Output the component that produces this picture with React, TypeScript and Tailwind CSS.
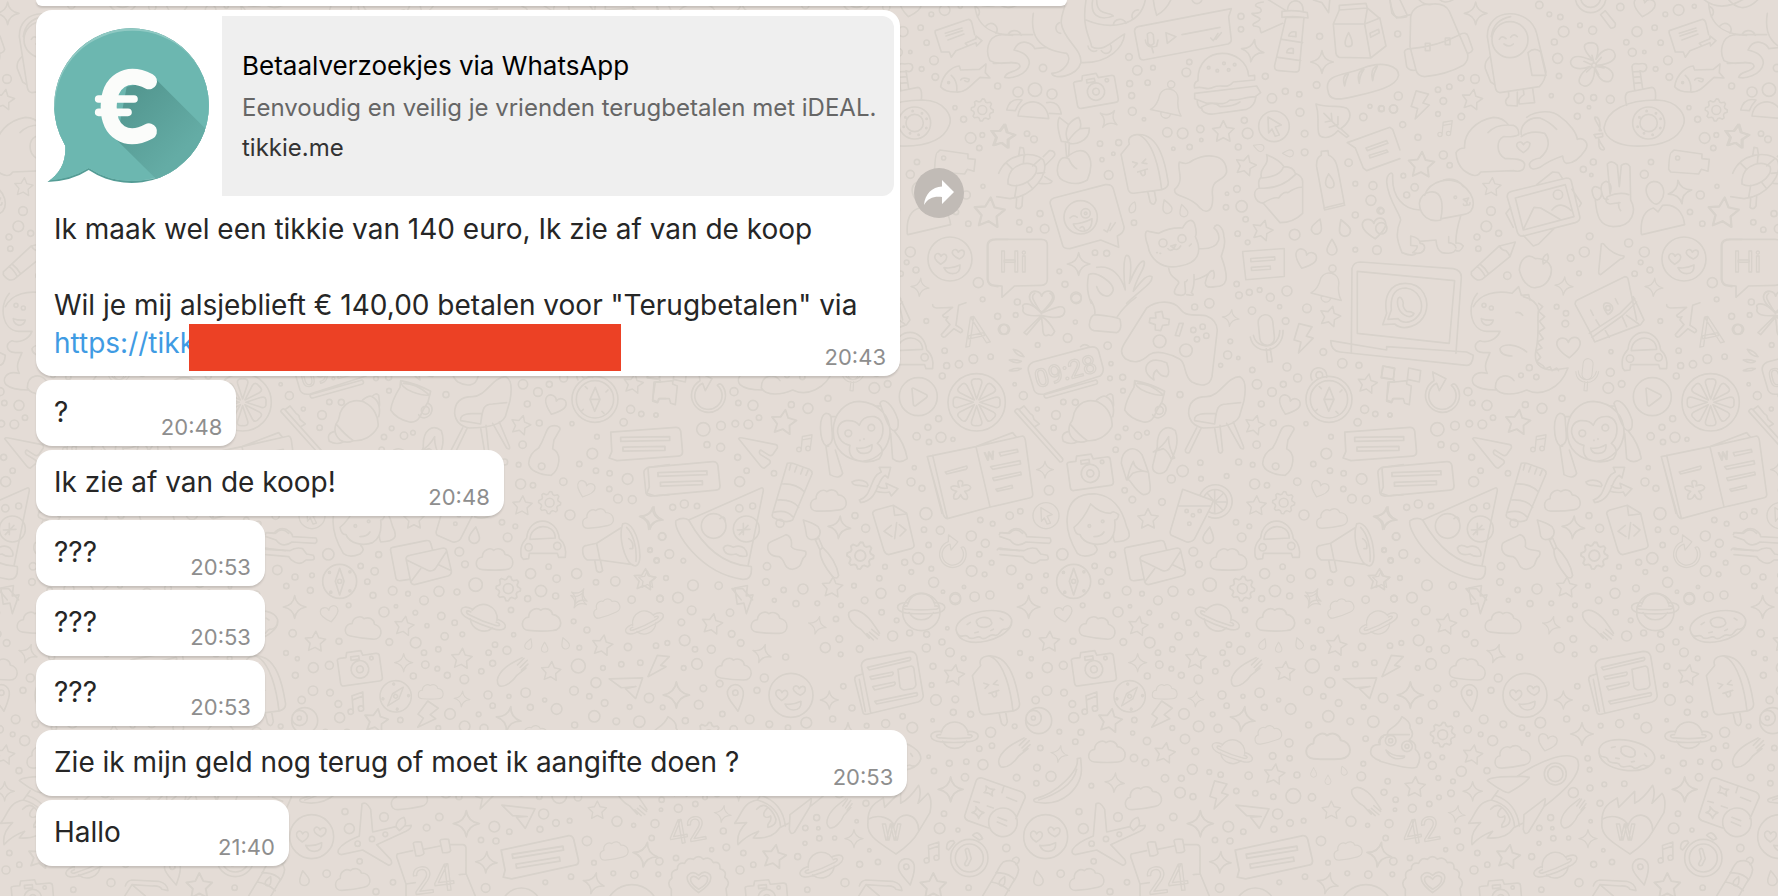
import type { ReactNode } from "react";

const ring = (x: number, y: number, r: number) =>
  `M${x - r} ${y}a${r} ${r} 0 1 0 ${2 * r} 0a${r} ${r} 0 1 0 ${-2 * r} 0`;

const burst = (points: number, outer: number, inner: number) => {
  const steps = Array.from({ length: points * 2 }, (_, i) => {
    const radius = i % 2 ? inner : outer;
    const angle = (Math.PI * i) / points - Math.PI / 2;
    return `${(Math.cos(angle) * radius).toFixed(1)} ${(Math.sin(angle) * radius).toFixed(1)}`;
  });
  return `M${steps.join("L")}Z`;
};

const cog = (r: number) => {
  const steps = Array.from({ length: 32 }, (_, i) => {
    const radius = i % 4 < 2 ? r : r * 0.78;
    const angle = (Math.PI * i) / 16;
    return `${(Math.cos(angle) * radius).toFixed(1)} ${(Math.sin(angle) * radius).toFixed(1)}`;
  });
  return `M${steps.join("L")}Z${ring(0, 0, r * 0.4)}`;
};

const slices = Array.from({ length: 8 }, (_, i) => i * 45);

// Every shape is centred on 0,0
const shapes = {
  star: burst(5, 34, 17),
  sparkle: "M0-34Q4-5 34 0Q4 5 0 34Q-4 5-34 0Q-4-5 0-34Z",
  gear: cog(35),
  cloud:
    "M-38 30C-64 28-60-6-38-8C-38-30-14-38-4-28C10-38 28-30 30-16C60-12 62 28 32 30Q0 33-38 30Z",
  drop: "M0-24C10-8 15 2 15 8A15 15 0 0 1-15 8C-15 2-10-8 0-24Z",
  heart: "M0 30C-30 8-36-8-32-18C-26-32-4-30 0-14C6-32 28-32 33-16C36-6 28 10 0 30Z",
  bolt: "M-16-42L22-36L8-8L28-4L-10 42L-6 10L-26 6Z",
  music:
    "M-12 20L-8-24L26-30L20 16M-8-12L24-18" + ring(-20, 22, 8) + ring(12, 18, 8),
  camera:
    "M-62-26Q-64-34-54-34L-36-34L-32-48L10-48L14-34L52-34Q62-34 62-26L62 38Q62 48 52 48L-52 48Q-62 48-62 38Z" +
    ring(0, 6, 26) + ring(0, 6, 10) + ring(38, -22, 5) + "M-22-34h24v10h-24Z",
  love:
    ring(0, 0, 66) +
    "M-28 16C-46 4-48-6-44-12C-38-20-30-16-27-8C-22-18-12-16-10-8C-8 2-18 10-28 16ZM28 0C10-8 4-18 8-24C14-32 22-28 25-20C30-30 42-28 43-20C44-10 36-4 28 0ZM-18 26Q6 30 30 18Q32 44 8 44Q-10 44-18 26Z",
  compass:
    ring(0, 0, 50) + "M0-38L13 0L0 40L-13 0Z" + ring(0, 0, 6) +
    ring(30, -28, 3) + ring(-30, -26, 3) + ring(30, 28, 3) + ring(-26, 32, 3),
  planet:
    "M-40-8A42 42 0 0 1 42-8M-36 18A42 42 0 0 0 38 18M-42-12C-84-14-80 18-40 20Q0 24 40 20C84 18 84-14 42-12M-42-2C-60-4-58 8-40 8Q0 12 40 8C58 8 60-4 42-2",
  comet:
    "M-38 40C-56 20-30-14 10-34M38-44L18-24M48-38L26-16M50-26L30-8M10-34L32-46M-38 40C-20 48 6 24 16 8L44-14",
  pin: "M0 42C-14 14-24 4-24-14A24 24 0 0 1 24-14C24 4 14 18 0 42Z" + ring(0, -14, 8),
  plane: "M-50-28L50-22L24 38L-4 6L28 2L-16 2Z",
  bell: "M-50 34L54 34C38 16 34 0 32-22A32 32 0 0 0-30-22C-30 0-34 20-50 34ZM-14 36A14 14 0 0 0 18 36" + ring(0, -62, 12),
  drip: "M-12 16C-20-2 2-18 8-20C14-4 14 18-2 20Q-8 22-12 16Z",
  banana:
    "M66-70L56-68C62-30-8 38-70 52Q-80 56-70 62C14 80 74 14 68-44ZM54-36C44 10-8 40-60 56",
  donut:
    "M-84 4C-84-50 70-70 84-18C92 40-76 78-84 4ZM-84 4C-76 40-60 14-50 26C-40 44-20 20-10 32C4 44 14 18 30 26C46 34 50 4 62 10C74 12 84 0 84-18M-20-12A22 12 0 1 0 22-16A22 12 0 1 0-20-12M-50-10l10-6M-28 16l10-2M20 12l8-4M50-24l8 6",
  car: "M-66 44C-72 10-58-2-50-12C-44-80 40-80 48-10C64 2 70 26 66 46L46 46L42 34L-42 34L-44 50L-60 52ZM-40-8C-38-56 34-60 36-12Z" + ring(-44, 16, 11) + ring(42, 12, 11),
  smallcompose: "M-66-40L66-40L60 48L-62 50ZM-42-16h76v10h-76ZM-42 12h60v10h-60Z",
  refresh:
    "M-22-44A51 51 0 1 0 46-28Q38-40 30-30A41 41 0 1 1-14-36L-6-14L14-50L-26-70Z",
  mic: "M-22-34A22 22 0 0 1 22-34L22 14A22 22 0 0 1-22 14ZM-50 6C-44 66 44 66 50-4M-40 2C-34 50 34 50 40-4M-6 46L-6 86L8 86L6 46",
  lolly:
    "M-66-30L-38-58Q-44-82-14-84C60-84 64 30 66 68Q66 84 46 88L-40 90Q-54 90-56 76ZM-10-84C34-64 44 30 44 88M2 90L6 122Q16 138 24 118L22 90M-34-4l14 6l-12 10M6-8l-12 10l14 4M-22 28L8 22M-14 28Q-10 48 0 36L0 26",
  label: "M-100-34L86-44Q98-44 100-32L104 26Q104 38 92 38L-84 48L-106 40L-98 22Z M-72-18h140v11h-140ZM-66 10h120v11h-120Z",
  arrow: ring(0, 0, 46) + "M-18-28L22-4L4 2L16 26L4 30L-6 8L-16 20Z",
};

type Shape = keyof typeof shapes;
type Spot = [Shape, number, number, number?, number?];
type Dot = [number, number, number];

interface Patch {
  x: number;
  y: number;
  spots: Spot[];
  dots: Dot[];
  lines: string[];
  words?: ReactNode;
}

const outline = { fontFamily: "Roboto, sans-serif" };

// The wallpaper is drawn at three times its size, one patch at a time
const patches: Patch[] = [
  {
    x: 1000,
    y: 0,
    spots: [
      ["sparkle", 758, 152, 1, 10], ["sparkle", 966, 186], ["sparkle", 326, 357, 0.9, 35], ["sparkle", 236, 792],
      ["camera", 287, 269, 1, -10], ["bell", 502, 308, 0.9, 12], ["star", 670, 396], ["star", 737, 497, 0.95, 15],
      ["star", 787, 692, 0.95, 15], ["star", 10, 410, 1.1, 10], ["arrow", 822, 379], ["drip", 398, 622, 0.8],
      ["drop", 500, 620, 0.9, -20], ["drop", 550, 632, 0.8, -15], ["drop", 952, 680, 1, 20], ["drop", 1032, 684, 1.1, -20],
      ["drop", 996, 742, 1], ["heart", 1123, 685, 1.05, -5], ["heart", 915, 778, 0.95, 20], ["smallcompose", 793, 788, 0.95, -4],
      ["lolly", 432, 486, 1, -6], ["drop", 776, 442, 0.7, -70], ["drop", 864, 460, 0.7, -90], ["bell", 984, 860, 0.9, 14],
      ["heart", 125, 904, 1.1],
    ],
    dots: [
      [723, 49, 9], [723, 88, 8], [387, 171, 10], [412, 211, 14], [459, 203, 7], [568, 186, 8], [559, 217, 13],
      [796, 229, 9], [389, 251, 9], [443, 248, 8], [395, 287, 9], [397, 334, 12], [432, 358, 5], [129, 204, 11],
      [959, 109, 9], [950, 255, 10], [856, 274, 9], [898, 283, 8], [816, 295, 14], [900, 337, 12], [502, 397, 14],
      [548, 400, 16], [601, 387, 11], [604, 420, 5], [569, 441, 8], [520, 446, 5], [733, 361, 9], [743, 400, 16],
      [715, 441, 9], [914, 401, 10], [914, 457, 10], [356, 428, 9], [300, 431, 8], [340, 461, 5], [306, 479, 6],
      [326, 525, 13], [81, 401, 8], [102, 418, 10], [681, 581, 5], [711, 567, 10], [678, 622, 8], [725, 619, 17],
      [737, 658, 8], [713, 701, 8], [743, 727, 7], [884, 704, 16], [402, 668, 8], [120, 641, 9], [58, 667, 8],
      [88, 689, 8], [134, 686, 13], [285, 758, 8], [320, 760, 9], [178, 814, 7], [195, 853, 9], [228, 892, 16],
      [1066, 551, 7], [1119, 557, 12], [1113, 601, 15], [1141, 632, 10], [1066, 645, 9], [1066, 749, 7], [1131, 750, 13],
      [1046, 488, 11], [1110, 319, 6], [1144, 326, 9], [1181, 327, 12], [1090, 351, 11], [710, 852, 8], [748, 877, 9],
      [779, 870, 7], [861, 873, 15], [717, 886, 10], [811, 892, 12], [591, -4, 15],
    ],
    lines: [
      // octopus
      "M100 40C90 100 110 150 200 160C220 180 190 220 155 220C160 240 230 230 242 190C250 150 190 120 184 70C182 50 190 36 194 20M-100-10C-60 30 0 40 100-60M262-20C240 80 270 110 275 140C310 160 340 120 374 102C370 140 330 190 245 188M290-40C250 60 310 60 340 48C330 34 290 50 290 0M258 60C330 90 420 80 436 0M0 104L98 104M24 104A22 22 0 0 1 64 106M178 68C162 76 166 98 182 100M264 138A18 18 0 0 0 290 152M304 152A16 16 0 0 0 332 136M340 74A20 20 0 0 1 378 70M398 56A18 18 0 0 1 416 30M42 150C60 110 100 130 104 146L140 142M42 150Q88 160 88 190C80 230 30 236 14 232C20 210 50 220 60 200C60 180 20 190-20 190",
      // voice note
      "M404 96Q402 84 414 80L694 26L686 50L694 120Q694 128 684 132L430 180Q420 180 418 170ZM442 102Q452 92 460 104L462 130Q452 142 444 130ZM436 120Q440 148 470 138L474 120M456 144L460 158M498 98L528 110L502 130ZM546 104L660 82M632 114l8 8l14-22M648 118l16-20",
      // burger
      "M594 242C590 130 740 140 746 228L764 226L764 240L700 246C680 270 664 250 640 262C620 274 610 256 584 264Q580 248 594 242M584 280L770 258L782 278L766 290C740 290 710 304 690 300C670 320 650 306 620 310L584 296ZM592 300C590 330 610 322 606 330Q616 344 640 342L740 328Q764 320 768 290M604 322Q640 300 660 320Q700 320 720 306",
      ring(626, 203, 4) + ring(652, 212, 4) + ring(686, 210, 4) + ring(672, 190, 4) + ring(704, 194, 4),
      // lighthouse
      "M858 52L824 196Q822 212 836 212L884 216Q898 216 898 206L912 52ZM846 34Q884 28 922 38L924 54Q884 46 846 52ZM862 32Q864 4 888 2Q910 6 910 34M846 118L908 128M834 172L902 182M866 108Q870 92 888 96L888 110ZM860 158Q862 142 880 146L880 160ZM858 32L800-4M848 70L784 98C776 90 790 80 762 78C750 70 780 66 780 56C770 46 756 48 756 40C780 40 790 36 780 24C760 18 762 10 790 6",
      // milk carton
      "M1000 72L1018 30L1018 16L1098 10L1102 24L1140 56L1158 138L1112 174L1018 172Q1010 170 1008 160ZM1000 72L1094 72L1112 174M1094 72L1102 26M1018 30L1102 24M1094 72L1140 54M1110 100L1136 88L1138 98L1112 112ZM1046 98C1062 130 1058 140 1046 140C1032 140 1032 124 1046 98",
      // bread
      "M984 272C970 220 1040 226 1090 204C1150 180 1196 200 1196 226C1190 260 1130 274 1060 290C1010 302 986 300 984 272M1034 258Q1024 226 1046 220Q1036 240 1034 258M1078 250Q1068 216 1092 208Q1078 228 1078 250M1118 242Q1110 204 1132 198Q1120 220 1118 242",
      // leaf
      "M948 312C990 326 1030 312 1044 328C1060 350 1040 376 1022 386L1046 408L1040 412L1014 392C990 420 960 416 956 400C950 370 960 350 948 312M972 340L1018 386M994 340L996 362L976 366M1014 350L1014 374L988 382",
      // speech note
      "M1042 428L1170 382L1178 388L1200 450M1042 428L1066 444L1090 504L1100 512L1200 476M1098 444L1160 422L1164 430L1102 452ZM1108 466L1160 450L1164 456L1110 474Z",
      // team
      ring(54, 276, 15) + ring(105, 269, 20) + ring(156, 282, 15) +
        "M54 348C60 290 140 290 146 356ZM20 330Q30 292 66 300Q52 316 46 332ZM140 308Q176 300 184 342L148 340",
      // turtle
      "M-4 520C20 460 100 450 130 480C150 520 100 590 30 596L-10 590M24 540C30 490 90 480 108 500C120 530 60 572 24 552ZM56 468L60 442L70 444L74 468M130 470L148 452C164 450 170 464 158 474L134 498M50 596L48 622Q58 632 66 618L68 588M134 530L156 544Q154 554 118 550M20 490L38 508M72 468L70 490M120 478L98 498M112 520L134 518M84 548L98 566M50 556L44 592",
      // tulip
      "M184 424C170 380 172 362 178 352L206 374Q220 356 236 352Q246 370 240 386L268 384C270 424 220 440 200 426ZM196 426L200 472M208 428L206 468M206 374Q192 400 204 424M240 386Q220 400 204 424M200 472C260 420 290 480 262 540C230 560 170 550 172 510C174 480 186 466 206 476Q216 500 230 506",
      // splash
      "M538 486C550 490 560 496 580 480C620 460 680 460 680 516C670 550 630 530 638 590C640 640 616 640 600 624C570 584 520 594 524 568C556 540 530 510 538 486Z",
      // cupcake
      "M784 532C776 500 810 500 800 464Q840 480 852 500Q880 500 886 520Q910 530 908 548L908 640Q880 668 840 668L790 610C760 606 756 570 778 564Q772 540 784 532ZM786 534Q840 530 850 502M778 564Q840 570 886 524M788 610Q820 590 836 594Q850 574 864 578Q890 560 908 562",
      // bottle
      "M964 466L964 454L984 452L986 466C1010 476 1012 500 1018 530L1034 616L974 630L950 500Q948 472 964 466ZM972 624L1030 610M986 522C1010 550 1004 564 990 564C972 560 974 540 986 522",
      // sticker
      "M152 616Q146 600 162 594L316 554Q336 552 340 566L372 680Q374 698 352 708L356 742L302 720L210 746Q190 746 188 736Z" +
        ring(242, 652, 50) + ring(257, 640, 14) + ring(257, 640, 4) +
        "M210 654Q220 642 232 652M220 672Q250 670 276 656Q276 694 246 694Q226 690 220 672M240 684Q250 674 254 690M312 690l10 6l10-26M330 692l16-24",
      // cat
      "M444 738C430 700 438 690 446 694L476 700Q510 682 548 684C560 660 576 654 584 672Q592 700 586 710C610 760 590 790 540 798C480 812 448 770 444 738M598 746C670 750 664 700 642 684C650 664 670 680 672 710C680 740 664 760 664 770C690 840 680 860 646 860Q614 866 616 848Q624 810 640 812Q646 826 640 836M506 804C510 840 540 836 536 850Q514 880 530 884Q560 892 556 870L554 846Q560 846 562 840M582 824Q584 860 574 878Q590 890 560 884M582 840Q620 830 634 812" +
        ring(489, 729, 12) + ring(546, 716, 12) + "M512 738L528 734L522 744ZM504 746Q510 756 522 746Q532 754 542 738M470 758h2M480 760h2M568 738l6-6",
      // sprouts
      "M290 802C330 796 360 820 376 870C370 830 370 770 380 766C400 764 390 840 388 850C400 820 420 780 432 784C440 800 410 830 400 874C420 850 440 820 456 830C460 850 420 870 380 910M266 824C290 810 340 850 340 870C330 900 300 890 290 860M266 824Q256 870 274 910",
      // Hi sign
      "M-10 718L124 718Q142 718 142 734L142 838Q142 856 124 856L44 858L6 892L6 858L-16 856Q-36 854-36 836L-36 736Q-36 720-10 718",
      // laptop lid
      "M1054 1060L1056 806Q1060 786 1082 786L1360 806Q1386 812 1384 834L1368 1060M1072 1000L1072 814L1364 842L1348 1030Z",
      "M-30-20Q20 60 80-10M460 0Q462 20 470 46Q500 30 514-4M940 0L966 8L986 38L990-8M1168-10L1176 40Q1190 60 1220 50",
    ],
    words: (
      <text x={-2} y={815} fontSize={88}>Hi</text>
    ),
  },
  {
    x: 1380,
    y: 0,
    spots: [
      ["sparkle", 287, 40], ["star", 276, 300, 0.95, 10], ["star", 124, 496, 1.2, 3], ["star", 335, 562, 0.85, 5],
      ["bolt", 120, 316, 1, 6], ["music", 196, 386, 0.8], ["sparkle", 552, 858, 0.8, 5], ["sparkle", 822, 862, 0.8, 5],
      ["love", 912, 777], ["gear", 1009, 330, 0.95], ["heart", 792, 22, 0.95, 10], ["sparkle", 900, 576, 1.05, -10],
      ["star", 1068, 410, 1.1, 10], ["star", 1030, 640, 1.4, 5],
    ],
    dots: [
      [53, 102, 9], [478, 15, 11], [508, 43, 7], [541, 51, 8], [551, 95, 16], [600, 76, 7], [638, 91, 12], [523, 126, 9],
      [533, 175, 15], [537, 228, 8], [721, 21, 11], [771, 95, 15], [739, 127, 8], [757, 157, 12], [793, 156, 5],
      [842, 128, 8], [824, 83, 8], [856, 43, 7], [896, 30, 16], [943, 19, 6], [864, 181, 13], [827, 207, 7], [868, 231, 10],
      [243, 234, 9], [285, 237, 13], [208, 260, 8], [174, 269, 8], [190, 303, 10], [244, 350, 10], [174, 342, 7],
      [55, 288, 12], [40, 327, 12], [5, 326, 8], [68, 374, 9], [114, 412, 9], [190, 465, 12], [209, 496, 8], [104, 562, 11],
      [70, 527, 7], [80, 585, 9], [333, 633, 13], [319, 679, 16], [356, 700, 9], [291, 711, 9], [295, 746, 8],
      [514, 287, 6], [597, 295, 15], [641, 293, 9], [691, 298, 12], [627, 322, 5], [592, 349, 9], [640, 486, 9], [610, 508, 9],
      [634, 525, 5], [813, 486, 8], [793, 523, 12], [927, 323, 6], [953, 358, 9], [974, 414, 16], [1009, 405, 7],
      [1000, 444, 8], [961, 585, 12], [1011, 559, 6], [930, 636, 8], [967, 671, 8], [629, 709, 10], [746, 729, 12],
      [793, 756, 15], [613, 756, 15], [572, 774, 10], [597, 820, 7], [782, 787, 7], [810, 810, 9], [764, 821, 8],
      [382, 827, 11], [997, 848, 15], [1055, 258, 9], [4, 633, 8], [4, 685, 17], [1010, 898, 7],
    ],
    lines: [
      // backpack
      "M92 50Q100 10 160 12Q196 10 208 34L262 160Q268 180 250 196Q200 224 134 230Q112 228 108 210L90 140ZM94 146Q170 140 236 106M136 130h14v22h-14ZM196 114h14v20h-14ZM238 104Q260 94 264 108L278 148Q276 158 262 160M94 146Q70 146 74 160L80 200Q90 214 108 210M30 0Q36 40 50 54L92 44M60 0L82 46M110-10Q130 20 160 12M172-10Q190 20 228-6",
      // astronaut
      "M322 110C320 20 450 20 470 100L498 216Q496 242 478 260L360 278Q348 276 346 262ZM334 110Q340 60 392 50M444 158Q464 140 482 156L498 226L456 226ZM330 170Q312 186 316 206L332 246L344 254M386 276L386 290Q370 304 382 316L412 318L412 276M430 270L432 284Q412 296 418 312L464 308L458 266" +
        ring(390, 119, 54) + "M358 118Q366 104 378 116M392 112Q402 98 412 110M372 132Q388 144 400 132",
      // magnifier
      ring(632, -8, 46) + ring(632, -8, 30) + "M662 44L692 84Q708 86 706 70L676 32Z",
      // flower
      "M640 182C600 140 610 128 636 128C662 130 654 160 648 178C670 140 700 140 706 166C704 190 670 194 652 196C690 200 710 220 692 242C664 256 650 220 644 204C644 240 630 260 612 258C584 250 600 220 630 200C590 214 570 200 572 184C582 156 620 176 640 182Z",
      ring(642, 196, 7) + "M642 189L636 166M648 190L664 172M649 199L672 204M645 203L656 224M636 201L620 216M635 194L612 184",
      // submarine
      "M672 384C680 330 740 300 830 300C900 302 920 350 910 376C890 430 820 440 760 438C720 436 676 420 672 384M740 316Q730 280 746 276L816 262Q830 264 826 300M764 270L756 200Q758 188 776 192Q802 186 800 204Q796 220 780 212L788 266M758 216L778 214M760 232L782 230M762 250L784 248M664 392C640 350 640 350 652 352C664 364 660 380 658 392ZM642 404L668 400L668 410L648 414ZM656 416C664 440 680 446 670 450C656 450 656 436 656 416" +
        ring(806, 369, 48) + ring(806, 369, 26) + ring(800, 333, 2) + ring(828, 340, 2) + ring(842, 356, 2) + ring(841, 384, 2) + ring(818, 404, 2) + ring(792, 400, 2) + ring(773, 380, 2) + ring(778, 352, 2),
      // chat card
      "M868 92L968 58Q976 60 978 70L986 104M868 92Q866 98 870 106L886 156L910 156L916 172L930 152L966 138M898 100L948 84M900 108L950 92M906 120L954 102M958 130L990 116L990 108L1008 122L992 138L990 128L966 138Z",
      // octopus arm
      "M986 10C990 90 1050 104 1100 106M990 20A18 18 0 0 1 994 50M1020 78A18 18 0 0 1 1050 100M1064 104C1020 110 1020 160 1032 182C1060 200 1090 182 1110 190",
      // fish
      "M884 260C890 220 920 200 940 198L944 210L1000 208L1020 192L1018 218L1032 234L1002 232C980 250 960 280 930 276C900 276 890 268 884 260M916 226Q936 244 932 276M944 240Q950 230 970 238Q968 250 956 242" + ring(908, 248, 3),
      // heart hands
      "M254 444C250 400 290 360 340 352Q370 352 386 376M324 398Q350 370 400 376Q418 384 416 404Q400 412 370 410C350 420 346 460 376 476Q430 474 434 492Q434 520 400 512L302 516Q290 540 250 510Q230 490 228 458Q236 444 254 444M424 404C420 380 440 350 480 354Q510 366 530 388M440 352C470 330 520 330 540 350C570 370 590 400 592 418C610 410 630 430 616 450Q590 490 560 490Q550 488 548 468Q510 480 480 502Q450 516 448 492Q454 478 480 474C510 450 510 420 494 400Q450 390 424 410",
      "M430 458C410 446 406 434 414 428Q424 422 430 434Q440 420 450 430Q450 446 430 458Z",
      // dog
      "M20 546C20 520 40 510 38 530C36 590 70 630 120 630M20 546C24 600 60 640 62 660C40 710 60 740 66 758Q100 772 110 760M92 708L92 736L112 738Q112 748 98 758Q130 766 134 744Q134 730 120 730Q120 714 92 708M120 724L168 720Q170 750 186 758Q220 764 226 750Q240 760 250 738Q240 726 228 730Q226 700 242 648M206 710L206 728Q226 730 228 744M150 576C190 570 190 620 182 660C150 668 120 650 118 610C120 590 130 580 150 576M134 586C150 540 210 530 244 552Q280 580 280 610Q280 640 250 644L186 656M190 540Q230 530 250 560M250 598L266 594L260 606ZM260 606L262 614Q250 620 250 612M262 614Q270 618 270 608" + ring(226, 592, 4),
      // photo
      "M382 592Q380 578 396 574L560 534Q572 534 574 544L600 652Q600 664 586 668L430 708Q416 710 412 696ZM406 594L556 554L582 650L430 690ZM430 688L462 622L482 624L540 658M516 630Q540 600 574 632M470 554L518 516L536 518L548 536M576 568L604 610L598 620M392 622L378 640L400 682M430 706L460 738L476 732L522 686" + ring(534, 584, 14),
      // peace
      "M646 600C650 650 660 678 700 680C760 680 770 630 752 600L750 500Q740 484 724 496L718 560L712 496Q696 478 682 492L690 580M746 584Q720 574 682 590Q672 610 690 612L720 608M716 608Q714 622 722 632M690 582Q700 550 678 544Q660 550 664 572Q670 604 684 598M664 568Q640 550 636 572Q640 600 652 600Q668 594 664 572",
      // film camera
      "M876 456Q868 456 866 508L872 516L956 522L964 508L984 514L988 478L966 476L966 462L882 450Z" + ring(893, 474, 6),
      // contact
      "M822 544C850 544 860 580 842 604Q830 620 816 606C790 580 794 548 822 544M784 702C780 650 800 630 820 624L834 636L848 616C890 610 910 640 914 674L786 704Z",
      // pencil
      "M274 816L358 738L406 726L390 770L306 838Q290 846 274 824ZM358 738Q366 752 378 752Q386 760 390 770M292 800Q306 810 316 830M300 792Q316 804 326 822",
      // apple
      "M466 776C440 756 420 780 418 810C430 860 460 866 470 862C500 860 516 830 514 806C510 780 480 774 466 776ZM490 792Q484 770 502 762Q512 780 490 792",
      // play
      "M664 732Q670 728 676 738Q700 764 732 768Q734 774 720 778L662 824Q656 824 656 816Z",
      // dino head
      "M280 920C300 880 350 870 396 880L416 860L424 886L446 884L450 900",
      // map
      "M592 900L734 830Q742 830 744 836L770 960M592 900Q584 904 586 914L630 996L644 1026L782 974L792 960L760 890",
      // Hi sign
      "M1086 718L1040 718Q1024 722 1024 736L1024 838Q1026 856 1044 858L1056 860",
    ],
  },
  {
    x: 1000,
    y: 300,
    spots: [
      ["sparkle", 692, 54, 0.75, 8], ["star", 990, 50, 0.95, 15], ["bolt", 910, 116, 1.05, 5], ["mic", 800, 100, 1, -6],
      ["star", 1102, 252, 0.9, 10], ["heart", 866, 316, 0.95, 20], ["star", 764, 376, 0.9, 15], ["camera", 270, 514, 1.05, -8],
      ["sparkle", 135, 509, 0.75], ["star", 444, 658, 0.95], ["gear", 851, 608, 0.95], ["star", 769, 618, 0.9, 3],
      ["heart", 958, 568, 0.8, 20], ["cloud", 996, 655, 0.85, -8], ["sparkle", 1158, 654, 1, 10], ["arrow", 138, 647, 0.85],
      ["car", 832, 726], ["cloud", 687, 779, 1], ["drop", 626, 706, 1.05, 8], ["compass", 221, 844, 1.02], ["gear", 727, 866, 1.05],
      ["star", 1136, 840, 1, 5], ["label", 1140, 430, 1.05, -1], ["sparkle", 940, 890, 0.8, 30],
    ],
    dots: [
      [52, 6, 9], [47, 45, 7], [14, 88, 15], [113, 135, 7], [203, 114, 13], [226, 66, 6], [229, -4, 15], [323, 137, 11],
      [333, 191, 6], [330, 235, 7], [368, 232, 9], [369, 272, 7], [584, 21, 9], [628, 10, 14], [756, 32, 11], [857, 63, 10],
      [839, 20, 6], [921, 25, 13], [691, 124, 7], [683, 165, 12], [715, 174, 5], [662, 196, 6], [757, 210, 8], [771, 253, 14],
      [816, 276, 13], [850, 253, 9], [784, 312, 9], [820, 369, 9], [770, 434, 11], [970, 156, 10], [1027, 190, 14],
      [1077, 196, 9], [861, 201, 12], [893, 234, 12], [918, 371, 6], [1094, 328, 12], [1126, 342, 8], [1170, 345, 6],
      [1073, 367, 11], [993, 410, 7], [979, 461, 16], [940, 492, 8], [990, 512, 8], [1031, 520, 8], [1085, 537, 16],
      [1030, 567, 8], [1056, 596, 13], [1099, 599, 12], [540, 284, 9], [70, 287, 12], [44, 253, 5], [112, 327, 6],
      [168, 345, 13], [161, 383, 8], [190, 306, 8], [226, 307, 9], [377, 385, 7], [354, 411, 8], [414, 407, 11], [441, 398, 7],
      [347, 449, 8], [374, 571, 8], [397, 599, 10], [486, 606, 10], [514, 537, 12], [548, 513, 17], [601, 488, 8], [603, 536, 7],
      [680, 528, 7], [716, 486, 9], [758, 494, 7], [764, 552, 15], [801, 556, 8], [892, 545, 11], [912, 645, 15],
      [708, 667, 8], [748, 679, 7], [725, 712, 13], [147, 571, 14], [61, 634, 8], [29, 647, 11], [187, 763, 17], [338, 764, 9],
      [34, 810, 14], [87, 831, 9], [138, 826, 7], [61, 858, 8], [133, 871, 9], [284, 798, 8], [326, 814, 11], [304, 845, 8],
      [321, 886, 9], [380, 872, 13], [426, 881, 7], [519, 874, 15], [573, 876, 9], [629, 854, 20], [580, 755, 13], [597, 793, 10],
      [794, 821, 15], [848, 800, 8], [872, 836, 11], [825, 873, 17], [869, 888, 9], [932, 821, 15], [990, 847, 8],
      [1048, 844, 14], [1152, 750, 7], [1172, 781, 8], [1188, 710, 11],
    ],
    lines: [
      // clover
      "M124 40C90 0 60 10 70 24C62 44 90 50 124 46C150 52 190 60 194 36C196 10 170 20 124 40M124 48Q150 66 164 94Q156 112 146 104Q128 116 128 80ZM122 48L72 98L80 104L126 50M124 40C100 0 90-10 104-20M124 40C150 10 170-10 150-20",
      // wrist
      "M272 0Q288 26 284 44M408-8Q370 20 352 50M284 44Q350 50 360 58Q368 90 350 98L282 92Q268 88 268 74Q270 48 284 44",
      // controller
      "M440 24C470 0 520 0 540 26C560 56 600 40 620 48Q650 60 652 90L636 230C630 260 600 260 576 246C550 230 560 190 540 178C510 160 470 150 448 164C420 190 400 190 376 176C360 160 362 148 376 126ZM466 38L486 34L490 54L508 58L506 74L488 76L482 92L466 90L466 74L448 68L450 54L468 54ZM538 70L550 70L538 108L526 106Z" +
        ring(479, 124, 19) + ring(558, 151, 19) + ring(580, 90, 8) + ring(608, 80, 8) + ring(591, 118, 8) + ring(619, 107, 8),
      // clock
      "M86 216Q80 196 100 186L266 142Q290 136 296 154L310 206Q310 220 300 228L132 282Q108 286 102 270ZM132 284L288 240Q296 246 290 252L140 294Q132 294 132 284M40 148Q62 152 72 170Q50 168 40 148M28 180Q46 176 64 184Q50 194 28 180M28 212Q46 202 64 206Q50 216 28 212M242 140Q254 128 268 140",
      // toothbrush
      "M44 334Q48 324 56 328L188 476Q190 486 180 486ZM58 328L72 318L90 340L98 346L102 358L118 372L104 380",
      // croissant
      "M222 340C240 290 290 300 300 310C320 320 340 350 336 380C320 410 290 424 262 422C230 400 210 370 210 372C220 360 220 350 222 340M290 300Q310 284 318 290C340 300 344 330 338 350M318 290Q330 276 338 286Q342 310 340 320M210 372Q200 400 222 420Q240 432 262 422M206 394Q180 400 190 424Q210 436 232 426",
      // mug
      "M404 242Q450 250 494 274Q490 290 486 306Q470 330 462 350Q450 370 430 366Q390 356 374 330Q378 300 402 262ZM404 242Q404 262 440 276Q480 290 492 284M412 250Q450 250 486 282" +
        ring(478, 331, 12) + "M486 310C506 320 500 350 474 354Q460 352 458 344M462 240Q430 220 440 196Q454 170 500 188Q512 220 500 230Q480 230 470 210Q456 220 462 240",
      // chair
      "M566 340C566 300 590 290 620 290C660 290 680 230 720 230C740 240 736 280 732 302L718 350Q700 384 610 384Q570 376 566 340M584 362C580 340 610 340 648 340L644 372ZM644 372C650 330 650 312 680 312L722 308M590 384L556 450Q556 462 568 458L604 384M644 384L656 456Q664 464 668 452L660 376M680 370L722 444Q734 452 730 438L700 366",
      // compass watch
      ring(987, 298, 69) + ring(987, 298, 56) + ring(958, 225, 10) + "M936 240A24 24 0 1 1 980 232M988 262L1002 298L986 334L972 298ZM972 298L1002 298M1020 276l6-6M1008 334l6 6M952 328l-6 6M958 260l6 6",
      // key
      "M818 444C840 410 840 380 856 378C880 374 886 386 880 392L864 420L860 446C890 460 880 510 856 526C820 526 790 510 788 490Q790 460 818 444" + ring(827, 499, 10),
      // flip-flops
      "M364 490C364 450 400 430 426 464Q440 500 446 520C450 560 460 584 430 584C400 570 390 530 380 540ZM382 540Q386 510 400 484Q404 510 444 516Q420 510 398 520ZM472 440C470 390 500 370 526 392C540 430 524 460 500 510C484 530 450 520 460 490ZM460 456Q490 440 506 410Q504 440 524 474L514 478Q506 456 490 446Z",
      // robot blocks
      "M1150 198L1184 204L1180 238L1144 234ZM1180 238L1184 246L1168 246L1160 300L1176 306L1180 296L1200 296",
      // laptop base
      "M992 122Q994 154 1020 156L1400 196Q1418 196 1420 166L1400 156L1160 140L1160 150L992 122",
      // girl
      "M202 650C206 600 240 580 290 582C350 590 370 640 380 680C396 710 390 724 344 726Q336 710 344 690M202 650Q196 700 232 760Q250 776 282 762Q300 750 284 736M272 612Q250 660 222 682Q226 704 240 704C250 730 290 740 320 728Q350 710 344 660Q354 660 356 644Q340 630 332 640Q300 640 272 612M282 710Q304 710 312 696" + ring(268, 678, 4) + ring(308, 664, 4),
      // drink
      "M548 568L640 602L634 618L584 716Q576 728 560 726L514 706Q508 700 512 690ZM534 618L634 618" + ring(560, 633, 5) + ring(579, 646, 5) + ring(599, 633, 5) + ring(568, 671, 5) +
        "M600 586A50 50 0 1 1 626 650M612 592A36 36 0 1 1 628 636M644 606L644 572M644 606L668 582M644 606L678 606M644 606L668 630M644 606L644 638M644 606L622 580",
      // envelopes
      "M374 752Q372 744 380 742L480 722Q492 720 494 730L500 750M374 752L390 836Q394 844 404 842L430 838M420 776Q420 768 432 766L532 744Q540 744 542 752L556 812Q558 824 546 828L446 854Q436 854 434 844ZM422 780L488 812Q500 816 508 806L542 754M434 846L464 806M518 794L556 812",
      // megaphone
      "M950 750Q950 736 964 736L992 730L1064 684M950 750Q950 772 964 780L1000 780L1100 794M992 730L1002 780M986 780L992 812Q1000 822 1010 812L1004 784M1070 672C1090 660 1120 700 1122 770C1120 804 1104 802 1090 788C1066 750 1060 700 1070 672M1082 682C1100 700 1114 740 1110 784M1088 716Q1104 726 1100 746L1092 746",
      // swabs
      "M0 698L24 700Q40 680 60 688Q80 700 80 710L150 714Q156 726 148 730L78 726Q50 746 30 720L0 710M0 748L72 752Q90 740 110 746L122 762L142 766Q150 780 136 780L120 780Q100 800 76 780L68 770L0 764",
      "M1134 520Q1132 506 1150 502L1210 494M1134 520L1140 580Q1144 590 1160 588L1210 584",
    ],
    words: (
      <text x={112} y={264} fontSize={76} transform="rotate(-15 112 264)">09:28</text>
    ),
  },
  {
    x: 1380,
    y: 300,
    spots: [
      ["heart", 566, 142, 1.05, -3], ["mic", 622, 214, 0.68, 6], ["car", 794, 160], ["refresh", 184, 286, 1], ["star", 413, 368, 1.15, 8],
      ["music", 476, 430, 0.85], ["cloud", 548, 602, 0.98, -3], ["sparkle", 580, 682, 1, 5], ["gear", 643, 767, 1.15],
      ["star", 559, 863, 0.95, 5], ["refresh", 918, 762, 0.78, 10], ["sparkle", 14, 655, 1, 10], ["label", 112, 534, 1.05, -2],
      ["star", 4, 840, 0.8],
    ],
    dots: [
      [530, 20, 7], [558, 40, 8], [556, 71, 10], [693, 155, 6], [841, 63, 7], [691, 217, 12], [685, 264, 16], [725, 252, 10],
      [896, 152, 8], [902, 197, 9], [939, 193, 11], [982, 177, 13], [1034, 170, 8], [889, 228, 9], [1055, 49, 9], [1072, 88, 15],
      [546, 295, 9], [486, 325, 15], [436, 314, 9], [264, 275, 12], [277, 309, 8], [321, 316, 15], [339, 353, 8], [307, 373, 13],
      [268, 371, 10], [225, 377, 13], [172, 388, 20], [183, 434, 9], [224, 442, 12], [275, 472, 9], [302, 512, 8], [281, 545, 15],
      [384, 520, 8], [30, 345, 6], [80, 622, 9], [115, 612, 12], [153, 618, 8], [49, 709, 11], [13, 751, 6], [70, 762, 13],
      [32, 782, 7], [112, 782, 7], [60, 834, 7], [141, 856, 16], [218, 857, 11], [96, 893, 16], [42, 896, 10], [878, 356, 9],
      [846, 382, 9], [812, 409, 11], [849, 426, 8], [885, 412, 15], [921, 418, 6], [805, 503, 6], [795, 546, 12], [828, 565, 9],
      [840, 641, 18], [834, 689, 8], [883, 691, 12], [848, 735, 8], [659, 685, 12], [627, 647, 9], [717, 800, 7], [776, 787, 9],
      [817, 775, 17], [796, 816, 7], [856, 806, 7], [863, 847, 15], [976, 708, 15], [1018, 730, 12], [1000, 763, 8], [977, 813, 16],
      [1037, 788, 7], [1016, 823, 7], [1003, 660, 8], [1040, 671, 7], [954, 861, 5], [891, 875, 5], [768, 865, 10], [705, 880, 15],
      [700, 835, 8], [624, 857, 7], [471, 867, 15], [413, 870, 8], [360, 846, 10], [363, 799, 11], [402, 670, 12], [448, 203, 9],
      [423, 226, 7], [469, 231, 8], [928, 894, 16], [986, 890, 14], [1032, 885, 12],
    ],
    lines: [
      // phone bubble on the laptop
      "M8 74L20 40C10-10 30-50 76-50C130-50 150 0 136 40C120 80 70 94 44 72ZM24 58L34 30C30-20 50-36 78-36C120-30 130 10 122 36C104 70 70 74 54 56ZM54-4C60-14 68-4 70 10Q66 20 80 34Q94 34 102 40Q96 54 80 48C60 40 48 20 54-4",
      // dino
      "M292-20C260 20 270 90 320 94L360 94C350 120 320 130 300 122C280 130 280 156 310 158L330 158C320 180 310 200 322 220M322 220C280 210 270 240 282 254Q300 270 346 270M346 264C346 220 390 220 402 242M346 264C360 290 410 284 440 270C480 290 540 270 564 204L520 210C480 210 460 190 468 150C480 100 470 50 476 30Q470 0 430-10M440 156C410 130 370 130 360 146Q360 166 396 168M304 56Q320 62 340 60Q336 76 320 76Q304 70 304 56M408 38Q420 34 428 46M476 10L488 20L476 34L494 50L478 64L494 84L476 96L490 116L472 126L486 144L468 152L482 172L470 184L488 196L496 206L510 200L516 212L530 204L536 212" + ring(312, 16, 6) + ring(334, 24, 6),
      // map fold
      "M628 100L720 40L764-4M636 112L726 48L770 6M726 48L740 80M632 30l8 16M648 60l10 16M676 92l12 20M706-4l8 16M740 46l36 26M684 44C664 20 668 4 688 10C704 20 700 34 684 44" + ring(684, 24, 7),
      // translate sign
      "M860 14Q860 22 872 24L920 22L890 46Q894 56 906 50L900 60L912 74L886 104Q888 114 898 110L924 86L944 98Q954 94 946 86L930 76L938 16L960 8",
      // robot
      "M8 198L44 206L40 238L4 232ZM86 204L122 212L118 246L82 238ZM40 238L44 246L82 242M24 246L20 304L34 308L38 296L70 296L74 310L88 314L94 258L80 252L80 244M24 246L44 246",
      // monkey
      "M562 396C560 340 600 304 640 304C700 308 734 350 732 400C728 440 700 480 650 484C600 480 562 450 562 396M612 436C570 430 560 370 600 362Q630 360 640 376Q650 346 686 350C720 360 716 410 694 430Q720 450 700 476Q660 496 622 476Q606 460 612 436M632 444Q656 448 678 434Q680 460 656 460Q636 462 632 444M642 420v2M654 416v2" + ring(607, 400, 10) + ring(676, 383, 10) +
        "M540 438C520 420 516 350 540 340Q556 340 556 360C556 400 570 430 540 438ZM548 438L540 440L552 524Q580 540 590 520L568 450M702 310C710 290 740 310 756 360Q760 392 744 392C730 390 720 360 702 310M734 400L740 476Q760 494 784 476Q776 430 744 392M556 350L570 350M690 318L704 318",
      // play button
      ring(817, 290, 57) + "M798 266Q800 262 806 266L842 284Q846 290 840 294L808 318Q802 318 802 312Z",
      // orange
      ring(992, 307, 86),
      ...slices.map((a) => {
        const rad = (a * Math.PI) / 180;
        const at = (r: number, t: number) =>
          `${(992 + Math.cos(rad + t) * r).toFixed(0)} ${(307 + Math.sin(rad + t) * r).toFixed(0)}`;
        return `M${at(10, 0)}L${at(58, -0.26)}Q${at(74, -0.26)} ${at(70, 0)}Q${at(74, 0.26)} ${at(58, 0.26)}Z`;
      }),
      // paper plane
      "M278 416Q280 412 290 414L390 434Q396 436 394 444L380 464Q374 470 366 464L344 450Q336 456 344 464L370 480Q376 486 370 492L356 504Q350 506 344 498Z",
      // toothpaste
      "M424 490Q430 488 440 490L490 508Q500 514 498 522L440 660Q420 672 384 654Q376 650 380 640ZM410 552Q450 550 476 576M396 600Q440 598 458 622M380 638Q420 626 440 650M434 494l-4 16M452 500l-6 16M470 506l-6 16M486 512l-6 14",
      // shuffle
      "M618 546Q630 538 650 542Q664 546 666 556M618 546Q620 558 640 556L664 560M640 600C680 590 670 530 706 516L700 502L734 502L726 534L718 526C690 540 700 600 644 608ZM694 558Q710 568 724 564L720 550L756 566L736 588L730 576Q710 580 690 574",
      // book
      "M844 470L990 440L1130 408Q1136 410 1138 420L1160 580Q1162 592 1150 594L1030 622L904 656Q896 654 892 644ZM860 466L904 654M990 440L1032 620M990 440L1100 398L1110 410M844 470L888 640M898 516L962 498Q966 504 960 508L902 522ZM1060 458L1114 448L1116 456L1064 468ZM1034 500L1122 482L1124 492L1040 508ZM1040 534L1124 516L1126 524L1044 542ZM1050 568L1098 556L1100 564L1054 574Z",
      "M940 562Q930 540 944 542Q954 544 948 558Q970 550 974 562Q974 572 956 574Q970 590 962 598Q950 600 944 584Q936 602 924 596Q920 584 932 574Q912 570 916 560Q926 554 940 562",
      // pizza
      "M128 660L346 564Q352 562 352 572L306 798Q200 790 128 660M128 660Q110 650 90 662C80 690 160 820 290 838Q320 840 316 800L306 798" + ring(203, 678, 37) + ring(301, 687, 39) + ring(280, 625, 11) + ring(320, 618, 9) +
        "M222 656Q236 644 238 664M292 670L292 704M274 690L312 688M280 704L306 676M232 744Q240 730 262 742Q280 734 294 744Q306 756 302 768Q284 772 270 762Q236 770 232 744",
      // splash
      "M368 730C380 720 400 716 420 704Q440 710 436 740C450 760 490 740 478 768C460 780 476 800 440 808C410 806 420 780 400 770C370 770 360 750 368 730",
      // brush
      "M472 660Q500 668 516 680Q530 700 514 714Q490 726 482 708Q478 680 472 660M508 720L518 714L530 742L522 750ZM522 750Q520 780 560 830Q574 840 578 826Q570 780 530 742",
      // code file
      "M680 640Q680 634 690 630L742 616L782 640L804 734Q806 742 796 746L728 764Q718 762 714 752ZM742 616L746 646L780 642M736 676L714 694L738 710M752 668L746 716M760 674L780 690L762 708",
      // paper plane edge
      "M258 866L290 866L320 900M258 866L286 900",
      ring(826, 936, 56),
      "M1060 704Q1062 696 1072 698L1090 700Q1110 680 1130 700M1054 750Q1058 742 1070 746L1120 752",
    ],
    words: (
      <>
        <text x={958} y={142} fontSize={120} transform="rotate(-12 958 142)">A</text>
        <text x={1018} y={482} fontSize={34} transform="rotate(-10 1018 482)">W</text>
      </>
    ),
  },
  {
    x: 1000,
    y: 596,
    spots: [
      ["sparkle", 86, 33], ["heart", 191, 54, 0.8, -12], ["cloud", 294, 96, 0.98, 8], ["star", 414, 91, 0.9, 10], ["star", 148, 138, 0.95, 3],
      ["camera", 281, 214, 1.02, -8], ["sparkle", 413, 200, 0.8], ["compass", 389, 301, 0.94, 40], ["cloud", 495, 288, 0.68],
      ["sparkle", 588, 309, 0.7, 5], ["music", 270, 322, 1, -10], ["star", 330, 375, 1.1, 10], ["bolt", 482, 360, 1, 25],
      ["cloud", 322, 468, 1], ["star", 494, 472, 0.95, 10], ["sparkle", 178, 474, 0.75, 10], ["sparkle", 344, 560, 0.85, 5],
      ["banana", 176, 556, 1], ["love", 137, 722, 1], ["cloud", 430, 606, 1, -8], ["cloud", 260, 850, 0.95, -8],
      ["planet", 652, 65, 0.98, 22], ["cloud", 828, 72, 1.05], ["star", 587, 189, 0.95, 5], ["comet", 737, 230, 0.98],
      ["star", 855, 227, 0.9, 5], ["cloud", 1021, 35, 0.75, -20], ["planet", 1134, 80, 0.85, -25], ["star", 1009, 149, 0.95, 10],
      ["plane", 1082, 272, 1, -5], ["drop", 789, 144, 0.7, 20], ["drop", 836, 154, 0.65], ["drop", 897, 142, 0.75, -20],
      ["sparkle", 728, 369, 1.1, 10], ["planet", 697, 467, 0.88, 20], ["cloud", 804, 415, 0.75, -15], ["star", 823, 536, 0.95, 8],
      ["bolt", 656, 598, 1, 5], ["plane", 756, 658, 1, 3], ["sparkle", 601, 683, 1.15], ["sparkle", 661, 799, 0.95, 3],
      ["cloud", 986, 452, 1.2], ["drop", 941, 530, 0.6], ["drop", 984, 552, 0.6], ["drop", 1031, 524, 0.6, -20],
      ["star", 994, 644, 0.85], ["comet", 1097, 614, 0.95, 85], ["cloud", 1044, 764, 0.78, -10], ["sparkle", 1138, 776, 1.1, 10],
      ["sparkle", 983, 862, 0.95, 15], ["label", 820, 782, 1.1, -9], ["comet", 40, 472, 1, 0], ["drop", 114, 847, 0.95, -10],
      ["sparkle", 938, 12, 0.8, 30],
    ],
    dots: [
      [248, 28, 7], [354, 48, 15], [390, 31, 5], [474, 13, 13], [448, 50, 7], [483, 89, 6], [526, 60, 11], [566, 80, 8], [536, 121, 11],
      [589, 115, 7], [80, 112, 11], [219, 136, 9], [370, 138, 10], [449, 140, 16], [474, 170, 8], [517, 160, 8], [478, 206, 11],
      [514, 218, 7], [442, 240, 9], [544, 238, 9], [595, 250, 13], [60, 171, 7], [94, 188, 6], [88, 238, 9], [142, 215, 15],
      [190, 208, 12], [141, 284, 14], [192, 290, 10], [107, 312, 11], [217, 324, 10], [221, 365, 15], [178, 407, 7], [243, 409, 9],
      [226, 437, 8], [44, 391, 7], [121, 456, 8], [111, 515, 10], [153, 541, 15], [109, 562, 8], [50, 545, 10], [403, 372, 8],
      [398, 411, 6], [441, 435, 11], [402, 486, 11], [436, 500, 10], [552, 354, 16], [517, 396, 7], [596, 391, 16], [654, 397, 12],
      [638, 355, 7], [555, 429, 14], [586, 466, 10], [577, 520, 15], [495, 547, 11], [544, 547, 9], [540, 590, 16], [579, 602, 9],
      [628, 528, 7], [662, 536, 8], [746, 539, 11], [709, 585, 8], [766, 592, 8], [820, 602, 8], [880, 600, 22], [891, 537, 9],
      [936, 604, 11], [274, 569, 7], [237, 647, 9], [354, 663, 13], [250, 698, 15], [318, 729, 8], [358, 715, 7], [275, 743, 8],
      [281, 796, 8], [182, 833, 11], [520, 663, 11], [482, 695, 10], [330, 887, 9], [381, 859, 8], [19, 756, 11], [645, 732, 8],
      [690, 735, 9], [685, 692, 16], [730, 707, 8], [833, 654, 15], [870, 681, 10], [911, 674, 7], [822, 700, 9], [963, 735, 14],
      [984, 800, 7], [1053, 676, 15], [1103, 688, 6], [1105, 836, 11], [1042, 832, 7], [915, 842, 8], [838, 859, 7], [659, 876, 13],
      [735, 42, 8], [743, 116, 6], [785, 8, 9], [923, 76, 7], [963, 102, 9], [940, 155, 7], [937, 210, 21], [1011, 216, 7],
      [1066, 205, 8], [1086, 153, 11], [1123, 200, 8], [1097, 11, 11], [668, 170, 8], [687, 146, 8], [723, 163, 12], [680, 202, 9],
      [646, 226, 8], [666, 297, 12], [680, 329, 8], [729, 301, 6], [779, 290, 14], [836, 312, 6], [793, 334, 9], [872, 339, 16],
      [924, 284, 13], [970, 301, 8], [990, 260, 15], [1016, 321, 10], [1091, 333, 7], [985, 361, 17], [926, 387, 9],
      [1051, 376, 10], [1120, 377, 17], [1097, 428, 8], [867, 441, 12], [818, 480, 10], [869, 487, 8], [1090, 503, 7],
      [1084, 541, 13], [116, 374, 39], [101, 366, 23], [100, 366, 6],
    ],
    lines: [
      // airplane
      "M288 624Q300 614 314 640L320 708L390 692Q392 670 414 664Q422 680 416 690L436 688Q436 698 420 706L332 746L374 790Q382 806 368 808L290 762L226 776Q212 774 218 760Q230 740 280 720ZM390 692L400 704L416 690",
      // calendar
      "M394 774L440 764M472 760L522 750M554 746L592 746Q600 748 600 756L600 832L632 910M394 774Q390 780 394 788L420 864L420 910M420 864L448 860M580 836L600 834M442 742Q442 736 466 738L474 772Q470 780 450 780ZM522 734Q524 728 548 730L554 764Q550 772 530 770Z",
      ring(766, 936, 60) + ring(1098, 946, 80),
      // poo
      "M1112 466Q1114 444 1140 446Q1138 426 1150 422M1112 466Q1110 484 1140 494",
    ],
    words: (
      <text x={444} y={896} fontSize={112} transform="rotate(-7 444 896)">24</text>
    ),
  },
  {
    x: 1380,
    y: 596,
    spots: [
      ["bolt", 296, 10, 1, -20], ["cloud", 371, 81, 0.98, 3], ["star", 198, 85, 0.95, 10], ["sparkle", 514, 88, 0.8, 15],
      ["sparkle", 348, 173, 0.85, 20], ["cloud", 264, 220, 0.98, 5], ["pin", 270, 304, 1, -8], ["love", 435, 298, 1],
      ["sparkle", 550, 312, 0.8], ["sparkle", 91, 297, 1.15], ["gear", 188, 416, 1.05], ["star", 278, 477, 0.9, 10],
      ["cloud", 398, 482, 0.98, -8], ["heart", 501, 440, 0.85, 15], ["sparkle", 606, 414, 1], ["star", 105, 574, 0.95, 3],
      ["sparkle", 278, 586, 0.85], ["sparkle", 230, 654, 0.75, 10], ["star", 384, 783, 1.1, 10], ["planet", 525, 808, 0.95, -22],
      ["planet", 825, 32, 0.98], ["donut", 1014, 93, 1, -3], ["star", 924, 238, 0.95, 10], ["planet", 925, 418, 0.98],
      ["donut", 739, 480, 1, 18], ["comet", 652, 84, 1, 85], ["comet", 578, 654, 0.9, -10], ["sparkle", 624, 728, 0.8],
      ["sparkle", 914, 580, 1.1], ["music", 858, 770, 0.95, -8], ["pin", 784, 826, 1, -12], ["star", 862, 872, 1.2],
      ["camera", 362, 900, 1, -5], ["lolly", 1048, 262, 1, -6],
    ],
    dots: [
      [137, 43, 13], [252, 50, 11], [106, 79, 10], [116, 133, 16], [147, 160, 8], [196, 160, 12], [257, 114, 10], [284, 141, 10],
      [30, 149, 8], [64, 141, 7], [113, 216, 7], [153, 204, 16], [42, 8, 10], [385, 13, 6], [450, 23, 9], [514, 22, 7], [570, 69, 8],
      [585, 28, 7], [656, 13, 10], [707, 49, 8], [752, 73, 7], [740, 120, 15], [580, 129, 10], [538, 155, 15], [584, 175, 7],
      [641, 159, 10], [419, 183, 9], [355, 246, 12], [221, 263, 10], [172, 277, 10], [333, 283, 9], [592, 271, 8], [618, 336, 9],
      [158, 326, 13], [50, 334, 7], [9, 306, 14], [229, 354, 8], [311, 370, 13], [370, 385, 10], [263, 400, 11], [302, 415, 7],
      [338, 434, 15], [426, 395, 8], [444, 415, 6], [481, 380, 16], [560, 369, 9], [118, 374, 9], [143, 478, 9], [187, 484, 7],
      [157, 508, 12], [244, 526, 15], [321, 524, 9], [175, 546, 7], [219, 556, 7], [213, 592, 10], [177, 604, 7], [148, 624, 8],
      [23, 556, 8], [12, 589, 9], [47, 611, 8], [45, 641, 5], [97, 637, 12], [27, 683, 12], [17, 726, 8], [232, 705, 9],
      [241, 754, 10], [197, 761, 6], [292, 771, 8], [322, 806, 8], [282, 822, 12], [90, 786, 8], [40, 796, 11], [37, 835, 7],
      [623, 487, 8], [629, 521, 7], [630, 576, 9], [673, 565, 7], [733, 563, 8], [580, 590, 15], [660, 622, 9], [632, 676, 5],
      [512, 665, 9], [478, 696, 8], [517, 697, 5], [520, 727, 8], [566, 726, 6], [477, 742, 6], [455, 782, 9], [597, 860, 12],
      [641, 805, 9], [696, 798, 8], [670, 763, 5], [484, 881, 8], [662, 389, 7], [719, 383, 12], [770, 361, 8], [799, 395, 16],
      [860, 373, 5], [848, 482, 5], [864, 525, 8], [910, 502, 9], [961, 497, 8], [957, 544, 11], [1011, 506, 15], [1038, 449, 8],
      [1000, 458, 8], [1034, 409, 15], [974, 355, 9], [922, 349, 9], [928, 310, 10], [870, 312, 16], [857, 267, 7], [861, 211, 9],
      [912, 169, 13], [841, 156, 12], [888, 138, 9], [842, 115, 9], [791, 111, 9], [904, 97, 5], [953, 187, 7], [894, 653, 8],
      [881, 697, 16], [936, 702, 6], [968, 875, 8], [928, 10, 16], [526, 534, 23], [526, 534, 33],
    ],
    lines: [
      // rocket
      "M410 542C470 500 560 460 592 490C610 530 560 580 492 632M410 542Q330 540 322 554Q370 590 386 590Q440 560 448 544Q430 540 410 542M492 610Q500 600 492 632L446 708Q434 720 430 700L432 656ZM354 584L334 612Q400 630 404 694L428 682M344 598Q410 620 418 690M334 612C290 620 290 650 266 682L302 680Q270 710 276 746Q300 720 338 706L322 726Q380 730 402 694M332 640Q350 620 366 634C340 660 360 670 374 660C380 680 360 680 366 694Q390 690 390 670Q380 640 356 628",
      // newspaper
      "M646 208Q648 194 662 190L790 166Q808 166 812 180L832 300Q830 314 816 318L666 354Q652 358 650 346L626 250Q626 240 636 238L650 234ZM646 208L674 350M640 250L658 346M664 214L792 184Q798 190 790 194L670 222ZM672 242L740 228Q744 234 738 238L676 250ZM680 272L746 258Q750 264 744 268L686 282ZM686 316L812 290Q818 296 810 300L692 324ZM756 220L796 210Q804 212 804 220L810 266Q808 276 800 278L774 282Q764 280 762 272Z",
      // poo
      "M22 416C20 394 50 400 66 362Q94 378 90 396Q106 416 88 432Q110 440 106 460Q130 480 110 514Q90 522 0 496M22 416L88 416M22 416Q0 416-4 440M18 462Q40 484 74 480Q74 490 46 488Q24 480 18 462" + ring(32, 434, 16) + ring(32, 434, 6) + ring(81, 451, 16) + ring(81, 451, 6),
      // flaming heart
      "M750 774C700 740 660 720 666 680C664 630 690 620 712 606L716 634L764 586L764 622Q790 610 818 568Q828 590 816 622L846 592Q860 610 852 650L818 706Q800 740 750 774M666 670C700 650 740 670 744 690C760 640 820 650 818 706",
      // calculator
      "M990 556Q994 544 1008 546L1128 588Q1138 594 1138 604L1110 668M990 556L956 660Q956 670 966 674L1028 696M1082 604L1112 616M1074 570l-6 20M984 616l16 4M1024 630l18 6M1020 570q4 14-6 20q14-2 26 10q-6-14 6-20q-14 2-26-10M990 632q4 14-12 18q16 2 20 18q4-14 16-18q-14-4-24-18" + ring(1071, 679, 43) + "M1056 664L1082 674M1054 678L1082 690",
      // alarm clock
      ring(970, 786, 56) + ring(970, 786, 42) + "M958 762Q962 754 968 760L976 788L966 808Q958 812 956 804L964 788ZM902 758Q900 734 922 734L926 740L908 762ZM980 718Q996 700 1010 728L1000 732Z",
      // lotion
      "M1100 790Q1112 776 1120 790Q1120 800 1110 806M1072 798Q1110 784 1118 820Q1116 840 1100 860L1070 912M1072 798Q1060 810 1052 830L1010 900M1050 830Q1090 830 1106 852M1036 858Q1070 864 1090 884M1076 842C1080 868 1070 872 1062 868Q1054 856 1076 842",
      // rosette
      "M76 880Q60 860 78 846Q72 824 94 820Q94 798 116 802Q124 782 142 790Q158 774 172 790Q192 780 202 800Q224 796 222 818Q244 824 236 844Q256 858 240 878L244 910M76 880L76 910M158 890C130 870 118 850 126 838Q140 822 158 838Q176 820 192 836Q204 860 158 890M158 880C136 866 130 852 136 844Q146 836 158 850Q170 832 184 844Q190 862 158 880",
      // glasses
      "M640 870Q644 854 660 852L740 856Q766 862 768 884L750 880Q744 868 720 870L660 866L632 910M660 866L700 900",
      "M6 242L34 178L70 182L44 208L60 212Z",
    ],
    words: (
      <>
        <text x={74} y={748} fontSize={100} transform="rotate(-10 74 748)">42</text>
        <text x={708} y={732} fontSize={66} fontWeight={700}>W</text>
      </>
    ),
  },
];

function Doodles() {
  return (
    <>
      {patches.map(({ x, y, spots, dots, lines, words }) => (
        <g key={`${x}-${y}`} transform={`translate(${x} ${y}) scale(0.3333)`}>
          {spots.map(([shape, sx, sy, size = 1, turn = 0], i) => (
            <path key={i} d={shapes[shape]} transform={`translate(${sx} ${sy}) rotate(${turn}) scale(${size})`} />
          ))}
          <path d={dots.map(([dx, dy, r]) => ring(dx, dy, r)).join("")} />
          <path d={lines.join("")} />
          <g style={outline} strokeWidth={4}>{words}</g>
        </g>
      ))}
    </>
  );
}

function Wallpaper() {
  return (
    <svg className="absolute inset-0 -z-10 h-full w-full" aria-hidden="true">
      <defs>
        <pattern id="doodles" x="266" width="734" height="896" patternUnits="userSpaceOnUse">
          <g fill="none" stroke="#d8d2cb" strokeWidth="5" strokeLinejoin="round" strokeLinecap="round">
            <g transform="translate(-1000 0)">
              <Doodles />
            </g>
            <g transform="translate(-1734 0)">
              <Doodles />
            </g>
            <g transform="translate(-266 0)">
              <Doodles />
            </g>
          </g>
        </pattern>
      </defs>
      <rect width="100%" height="100%" fill="url(#doodles)" />
    </svg>
  );
}

function TikkieLogo() {
  return (
    <svg viewBox="126 48 540 540" className="h-[180px] w-[180px] shrink-0" role="img" aria-label="Tikkie">
      <defs>
        <linearGradient id="shade" x1="380" y1="300" x2="540" y2="460" gradientUnits="userSpaceOnUse">
          <stop offset="0" stopColor="#549891" />
          <stop offset="1" stopColor="#64aca5" />
        </linearGradient>
        <clipPath id="balloon">
          <path d="M192 430A232 232 0 1 1 266 510Q214 544 142 546Q200 508 196 438Z" />
        </clipPath>
      </defs>
      <g clipPath="url(#balloon)">
        <rect x="126" y="48" width="540" height="540" fill="#549c95" />
        <path d="M126 48H666V318A270 226 0 0 1 396 543A231 231 0 0 1 266 504Q214 538 126 542Z" fill="#8fc9c3" />
        <path d="M165 318A232 226 0 0 1 629 318A233 226 0 0 1 396 543A231 231 0 0 1 266 504Q214 538 142 542L126 440Z" fill="#6cb7b0" />
        <path d="M470 240L640 410L480 548L350 420L380 260Z" fill="url(#shade)" />
      </g>
      <g fill="none" stroke="#fbfcfa" strokeLinecap="round">
        <path d="M447 244C380 210 326 244 326 320C326 396 380 430 447 394" strokeWidth="48" />
        <path d="M296 297H402M296 337H384" strokeWidth="23" />
      </g>
    </svg>
  );
}

function Time({ children }: { children: string }) {
  return <time className="absolute right-[14px] bottom-[7px] text-[22px] leading-6 text-[#8e8e8e]">{children}</time>;
}

interface MessageProps {
  text: string;
  time: string;
}
function Message({ text, time }: MessageProps) {
  return (
    <li className="relative w-fit rounded-2xl bg-white pt-[13px] pr-[168px] pb-[15px] pl-[18px] shadow-[0_2px_2px_rgba(0,0,0,0.13)]">
      <p>{text}</p>
      <Time>{time}</Time>
    </li>
  );
}

function PaymentRequest() {
  return (
    <li className="flex items-center gap-[14px]">
      <div className="relative w-[864px] rounded-2xl bg-white p-[6px] pb-[14px] shadow-[0_2px_2px_rgba(0,0,0,0.13)]">
        <a href="#tikkie" className="flex overflow-hidden rounded-xl bg-white">
          <TikkieLogo />
          <div className="flex grow flex-col justify-center bg-[#efefef] pl-5 whitespace-nowrap">
            <h2 className="text-[26px] leading-[42px] text-black">Betaalverzoekjes via WhatsApp</h2>
            <p className="text-2xl leading-[42px] text-[#666666]">
              Eenvoudig en veilig je vrienden terugbetalen met iDEAL.
            </p>
            <p className="text-2xl leading-[38px] text-[#333333]">tikkie.me</p>
          </div>
        </a>
        <div className="mt-[14px] pl-3">
          <p>Ik maak wel een tikkie van 140 euro, Ik zie af van de koop</p>
          <br />
          <p>Wil je mij alsjeblieft € 140,00 betalen voor "Terugbetalen" via</p>
          <p className="relative">
            <a href="#betalen" className="text-[#3f9be3]">
              https://tikk
            </a>
            <span className="absolute top-0 left-[135px] h-[47px] w-[432px] bg-[#ec4125]" />
          </p>
        </div>
        <Time>20:43</Time>
      </div>
      <button
        type="button"
        aria-label="Doorsturen"
        className="flex h-[50px] w-[50px] items-center justify-center rounded-full bg-[#c1bbb6]"
      >
        <svg viewBox="0 0 30 26" className="h-[26px] w-[30px]" fill="white">
          <path d="M18 0L30 12L18 24V17C10 16 4 18 0 25C1 14 8 7 18 6.500Z" />
        </svg>
      </button>
    </li>
  );
}

export default function App() {
  return (
    <main className="relative isolate min-h-screen overflow-hidden bg-[#e4dcd6] font-[Inter,sans-serif] text-[28px] leading-[38px] text-[#262626]">
      <Wallpaper />
      <ul className="flex flex-col gap-1 pb-[30px] pl-9">
        <li className="h-[6px] w-[1031px] rounded-b-2xl bg-white shadow-[0_2px_2px_rgba(0,0,0,0.13)]" />
        <PaymentRequest />
        <Message text="?" time="20:48" />
        <Message text="Ik zie af van de koop!" time="20:48" />
        <Message text="???" time="20:53" />
        <Message text="???" time="20:53" />
        <Message text="???" time="20:53" />
        <Message text="Zie ik mijn geld nog terug of moet ik aangifte doen ?" time="20:53" />
        <Message text="Hallo" time="21:40" />
      </ul>
    </main>
  );
}
